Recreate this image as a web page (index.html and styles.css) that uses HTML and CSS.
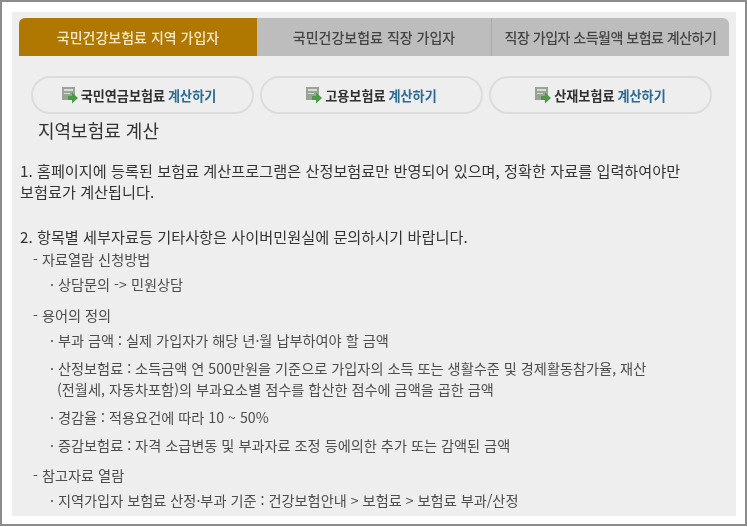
FILE: index.html
```html
<!DOCTYPE html>
<html lang="ko">
<head>
<meta charset="UTF-8">
<title>지역보험료 계산</title>
<link rel="stylesheet" href="styles.css">
</head>
<body>

<div class="frame">
  <div class="panel">

    <!-- Tabs -->
    <div class="tabs">
      <div class="tab active">국민건강보험료 지역 가입자</div>
      <div class="tab">국민건강보험료 직장 가입자</div>
      <div class="tab last">직장 가입자 소득월액 보험료 계산하기</div>
    </div>

    <!-- Link buttons -->
    <div class="links">
      <a class="link wide">
        <svg class="ico" viewBox="0 0 16 17"><rect x="0" y="0" width="13" height="13" fill="#9aa397"/><rect x="2" y="2" width="9" height="2" fill="#d8dcd5"/><rect x="2" y="6" width="6" height="1" fill="#d8dcd5"/><path d="M6 9h4V5.5l6 5.5-6 5.5V13H6z" fill="#4c9a48"/></svg>
        <b>국민연금보험료</b> <b class="blue">계산하기</b>
      </a>
      <a class="link">
        <svg class="ico" viewBox="0 0 16 17"><rect x="0" y="0" width="13" height="13" fill="#9aa397"/><rect x="2" y="2" width="9" height="2" fill="#d8dcd5"/><rect x="2" y="6" width="6" height="1" fill="#d8dcd5"/><path d="M6 9h4V5.5l6 5.5-6 5.5V13H6z" fill="#4c9a48"/></svg>
        <b>고용보험료</b> <b class="blue">계산하기</b>
      </a>
      <a class="link">
        <svg class="ico" viewBox="0 0 16 17"><rect x="0" y="0" width="13" height="13" fill="#9aa397"/><rect x="2" y="2" width="9" height="2" fill="#d8dcd5"/><rect x="2" y="6" width="6" height="1" fill="#d8dcd5"/><path d="M6 9h4V5.5l6 5.5-6 5.5V13H6z" fill="#4c9a48"/></svg>
        <b>산재보험료</b> <b class="blue">계산하기</b>
      </a>
    </div>

    <h1>지역보험료 계산</h1>

    <p class="para">1. 홈페이지에 등록된 보험료 계산프로그램은 산정보험료만 반영되어 있으며, 정확한 자료를 입력하여야만<br>보험료가 계산됩니다.</p>
    <p class="para second">2. 항목별 세부자료등 기타사항은 사이버민원실에 문의하시기 바랍니다.</p>

    <div class="sub first">- 자료열람 신청방법</div>
    <div class="item">· 상담문의 -&gt; 민원상담</div>

    <div class="sub">- 용어의 정의</div>
    <div class="item">· 부과 금액 : 실제 가입자가 해당 년·월 납부하여야 할 금액</div>
    <div class="item">· 산정보험료 : 소득금액 연 500만원을 기준으로 가입자의 소득 또는 생활수준 및 경제활동참가율, 재산<br><span class="indent">(전월세, 자동차포함)의 부과요소별 점수를 합산한 점수에 금액을 곱한 금액</span></div>
    <div class="item">· 경감율 : 적용요건에 따라 10 ~ 50%</div>
    <div class="item">· 증감보험료 : 자격 소급변동 및 부과자료 조정 등에의한 추가 또는 감액된 금액</div>

    <div class="sub last">- 참고자료 열람</div>
    <div class="item">· 지역가입자 보험료 산정·부과 기준 : 건강보험안내 &gt; 보험료 &gt; 보험료 부과/산정</div>

  </div>
</div>

</body>
</html>
```

FILE: styles.css
```css
html, body {
  margin: 0;
  padding: 0;
}
body {
  width: 747px;
  height: 527px;
  overflow: hidden;
  background: #fff;
  font-family: "Noto Sans CJK KR", "Noto Sans", sans-serif;
  color: #3a3a3a;
}
.frame {
  box-sizing: border-box;
  width: 747px;
  height: 526px;
  border: 2px solid #8c8c8c;
  padding: 10px;
}
.panel {
  box-sizing: border-box;
  width: 724px;
  height: 504px;
  padding: 6px 7px 0;
  background: #eeeeee;
  overflow: hidden;
  filter: blur(0.35px);
}

/* Tabs */
.tabs {
  display: grid;
  grid-template-columns: 238px 234px 238px;
  height: 38px;
}
.tab {
  display: flex;
  align-items: center;
  justify-content: center;
  background: #bdbdbd;
  color: #444;
  font-size: 14px;
  font-weight: 500;
  white-space: nowrap;
}
.tab.active {
  background: #b07800;
  color: #f6e7c4;
  border-radius: 6px 0 0 0;
}
.tab.last {
  border-left: 1px solid #aaa;
  border-radius: 0 6px 0 0;
  letter-spacing: -0.5px;
}

/* Link buttons */
.links {
  display: grid;
  grid-template-columns: repeat(3, 223px);
  gap: 6px;
  margin: 20px 0 0 12px;
}
.link {
  box-sizing: border-box;
  height: 38px;
  display: flex;
  align-items: center;
  justify-content: center;
  gap: 3px;
  border: 2px solid #dcdcdc;
  border-radius: 19px;
  font-size: 13.1px;
  color: #2f2f2f;
  white-space: pre;
}
.link.wide {
  padding-right: 7px;
}
.blue {
  color: #2a6b96;
}
.ico {
  width: 16px;
  height: 17px;
  flex: none;
}

h1 {
  margin: 4px 0 0 19px;
  font-size: 18px;
  line-height: 25px;
  font-weight: 400;
  color: #333;
}

/* Body text */
.para {
  margin: 17px 0 0 1px;
  font-size: 15.2px;
  line-height: 21px;
  color: #333;
}
.para.second {
  margin-top: 24px;
}
.sub {
  margin: 10px 0 0 14px;
  font-size: 14.2px;
  line-height: 20px;
  color: #4d4d4d;
}
.sub.first {
  margin-top: 2px;
}
.sub.last {
  margin-top: 9px;
}
.item {
  margin: 7px 0 0 31px;
  font-size: 14.2px;
  line-height: 21px;
  color: #4d4d4d;
}
.sub + .item {
  margin-top: 5px;
}
.indent {
  margin-left: 7px;
}
```
